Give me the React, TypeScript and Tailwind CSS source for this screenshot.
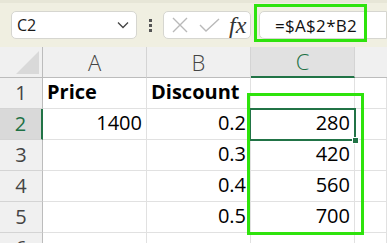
import React from "react";

const font = { fontFamily: '"Open Sans", "Noto Sans", sans-serif' };

function Cell({
  children,
  className = "",
}: {
  children?: React.ReactNode;
  className?: string;
}) {
  return (
    <div
      className={
        "h-[31px] border-r border-b border-[#e1e1e1] flex items-end pb-[2px] px-[4px] text-[20px] leading-[28px] text-black overflow-visible whitespace-nowrap " +
        className
      }
    >
      {children}
    </div>
  );
}

function RowHead({ n, sel = false }: { n: number; sel?: boolean }) {
  return (
    <div
      className={
        "h-[31px] flex items-center justify-center text-[20px] border-b border-[#d4d4d4] " +
        (sel
          ? "bg-[#d9d9d9] text-[#1e7145] border-r-2 border-r-[#217346]"
          : "bg-[#f0f0f0] text-[#444] border-r border-r-[#bcbcbc]")
      }
    >
      {n}
    </div>
  );
}

export default function App() {
  const rows: [string, string, string, string, boolean, boolean][] = [
    ["Price", "Discount", "", "", true, false],
    ["1400", "0.2", "280", "", false, true],
    ["", "0.3", "420", "", false, false],
    ["", "0.4", "560", "", false, false],
    ["", "0.5", "700", "", false, false],
    ["", "", "", "", false, false],
  ];
  return (
    <div className="w-[387px] h-[243px] overflow-hidden bg-white relative" style={font}>
      {/* toolbar */}
      <div className="h-[47px] bg-[#f0efe1] border-t-[3px] border-[#e7e6d7] flex items-start pt-[8px] pl-[11px]">
        <div className="w-[126px] h-[28px] bg-white border border-[#d6d6d0] rounded-[5px] flex items-center pl-[5px] pr-[7px]">
          <span className="text-[16px] text-[#1a1a1a] leading-none">C2</span>
          <svg className="ml-auto" width="12" height="8" viewBox="0 0 12 8">
            <path d="M1 1.5 L6 6.5 L11 1.5" fill="none" stroke="#444" strokeWidth="1.3" />
          </svg>
        </div>
        <div className="w-[26px] h-[28px] flex flex-col items-center justify-center gap-[2px]">
          <div className="w-[3px] h-[3px] bg-[#555]" />
          <div className="w-[3px] h-[3px] bg-[#555]" />
          <div className="w-[3px] h-[3px] bg-[#555]" />
        </div>
        <div className="w-[88px] h-[28px] bg-white border border-[#d6d6d0] rounded-[5px] flex items-center pl-[8px]">
          <svg width="16" height="16" viewBox="0 0 16 16">
            <path d="M1 1 L15 15 M15 1 L1 15" stroke="#b9b9b9" strokeWidth="1.4" />
          </svg>
          <svg className="ml-[11px]" width="21" height="15" viewBox="0 0 21 15">
            <path d="M1 7 L7 13 L20 1" fill="none" stroke="#b9b9b9" strokeWidth="1.4" />
          </svg>
          <span
            className="ml-[9px] text-[24px] italic text-[#333] leading-none"
            style={{ fontFamily: '"Liberation Serif", "DejaVu Serif", serif' }}
          >
            fx
          </span>
        </div>
        <div className="ml-[8px] flex-1 h-[28px] bg-white border border-[#d6d6d0] rounded-l-[5px] flex items-center pl-[15px]">
          <span className="text-[17px] text-[#111] leading-none tracking-[0.3px]">=$A$2*B2</span>
        </div>
      </div>

      {/* grid */}
      <div className="grid grid-cols-[43px_104px_104px_104px_1fr]">
        <div className="h-[31px] bg-[#f0f0f0] border-r border-b border-[#bcbcbc] flex items-end justify-end pr-[3px] pb-[3px]">
          <svg width="23" height="23" viewBox="0 0 23 23">
            <path d="M23 0 L23 23 L0 23 Z" fill="#d9d9d9" />
          </svg>
        </div>
        {["A", "B"].map((c) => (
          <div
            key={c}
            className="h-[31px] bg-[#f0f0f0] border-r border-[#d4d4d4] border-b border-b-[#bcbcbc] flex items-center justify-center text-[22px] font-light text-[#444]"
          >
            {c}
          </div>
        ))}
        <div className="h-[31px] bg-[#e1e1e1] border-r border-[#d4d4d4] border-b-2 border-b-[#217346] flex items-center justify-center text-[22px] font-light text-[#1e7145]">
          C
        </div>
        <div className="h-[31px] bg-[#f0f0f0] border-b border-[#bcbcbc]" />

        {rows.map((r, i) => (
          <React.Fragment key={i}>
            <RowHead n={i + 1} sel={r[5]} />
            <Cell className={r[4] ? "font-bold justify-start" : "justify-end"}>{r[0]}</Cell>
            <Cell className={r[4] ? "font-bold justify-start" : "justify-end"}>{r[1]}</Cell>
            <Cell className="justify-end">{r[2]}</Cell>
            <Cell>{r[3]}</Cell>
          </React.Fragment>
        ))}
      </div>

      {/* selection of C2 */}
      <div className="absolute left-[249px] top-[108px] w-[107px] h-[33px] border-2 border-[#217346]" />
      <div className="absolute left-[352px] top-[137px] w-[7px] h-[7px] bg-[#217346] border border-white" />

      {/* green highlight rectangles */}
      <div className="absolute left-[247px] top-[93px] w-[117px] h-[142px] border-[3px] border-[#2ee30c]" />
      <div className="absolute left-[254px] top-[4px] w-[113px] h-[38px] border-[3px] border-[#2ee30c]" />
    </div>
  );
}
